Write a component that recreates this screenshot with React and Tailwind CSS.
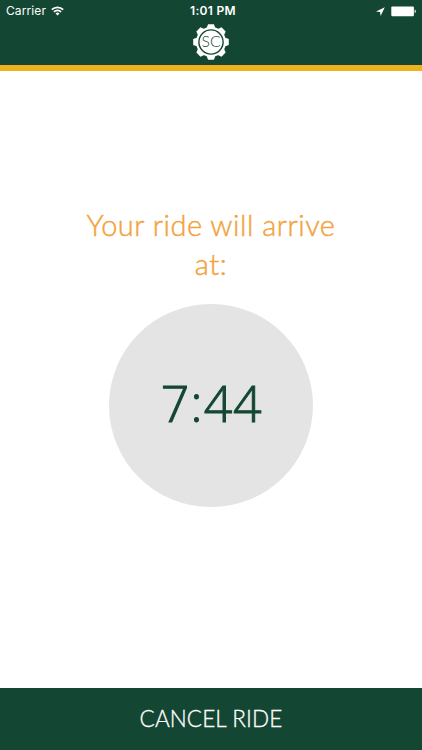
import React from 'react';

const WifiIcon = () => (
    <svg width="13" height="10" viewBox="0 0 13 10" fill="none" stroke="#fff" strokeWidth="1.7">
        <path d="M0.8 3.7a8.1 8.1 0 0 1 11.4 0" />
        <path d="M2.9 5.9a5.1 5.1 0 0 1 7.2 0" />
        <path d="M6.5 9.6L4.5 7.5a2.9 2.9 0 0 1 4 0z" fill="#fff" stroke="none" />
    </svg>
);

const LocationIcon = () => (
    <svg width="9" height="9" viewBox="0 0 9 9" fill="#fff">
        <path d="M8.8 0.2L0 4.5l4.1 0.5 0.5 4z" />
    </svg>
);

const BatteryIcon = () => (
    <svg width="26" height="11" viewBox="0 0 26 11" fill="#fff">
        <rect x="0.3" y="0.4" width="22.6" height="9.8" rx="1" />
        <path d="M23.7 3.6c1.5 0.3 1.5 3.3 0 3.6z" />
    </svg>
);

const teeth = [0, 45, 90, 135, 180, 225, 270, 315];

const Logo = () => (
    <svg width="36" height="36" viewBox="-18 -18 36 36">
        <g fill="#fff">
            <circle r="15" />
            {teeth.map((angle) => (
                <path key={angle} d="M-4.6 -13.5L-2.9 -17.8h5.8L4.6 -13.5z" transform={`rotate(${angle})`} />
            ))}
        </g>
        <circle r="12.1" fill="none" stroke="#144733" strokeWidth="1.4" />
        <text
            x="0"
            y="5.2"
            textAnchor="middle"
            textLength="19"
            lengthAdjust="spacingAndGlyphs"
            fill="#144733"
            className="font-['Lato',sans-serif] text-[15px] font-light"
        >
            SC
        </text>
    </svg>
);

const StatusBar = () => (
    <div className="grid h-[22px] grid-cols-3 items-center font-['Inter',sans-serif] text-[12px] text-white">
        <div className="flex items-center gap-[5px] pl-[6px]">
            <span className="tracking-[0.1px]">Carrier</span>
            <WifiIcon />
        </div>
        <span className="pl-[4px] text-center font-semibold tracking-[0.3px]">1:01 PM</span>
        <div className="flex items-center justify-end gap-[6px] pr-[5px]">
            <LocationIcon />
            <BatteryIcon />
        </div>
    </div>
);

const App = () => {
    return (
        <div className="flex h-screen w-full flex-col bg-white font-['Lato',sans-serif]">
            {/* Header */}
            <header className="h-[71px] border-b-[6px] border-[#efb21f] bg-[#144733]">
                <StatusBar />
                <div className="mt-[2px] flex justify-center">
                    <Logo />
                </div>
            </header>

            {/* Arrival time */}
            <main className="flex flex-1 flex-col items-center pt-[134px]">
                <h1 className="w-[270px] text-center text-[29px] leading-[39px] font-light tracking-[0.5px] text-[#f2a33c] [-webkit-text-stroke:0.45px_#f2a33c]">
                    Your ride will arrive at:
                </h1>
                <div className="mt-[20.5px] flex size-[203.5px] items-center justify-center rounded-full bg-[#e4e4e4]">
                    <span className="pb-[3px] pl-[1px] font-['Open_Sans',sans-serif] text-[50px] font-light tracking-[0.8px] text-[#144733] [-webkit-text-stroke:1px_#144733]">
                        7<span className="mr-[0.5px] ml-[0.5px]">:</span>44
                    </span>
                </div>
            </main>

            <button className="h-[62px] bg-[#144733] pb-[1px] text-[22.5px] font-light tracking-[0.1px] text-white [-webkit-text-stroke:0.3px_#fff]">
                CANCEL RIDE
            </button>
        </div>
    );
};

export default App;
